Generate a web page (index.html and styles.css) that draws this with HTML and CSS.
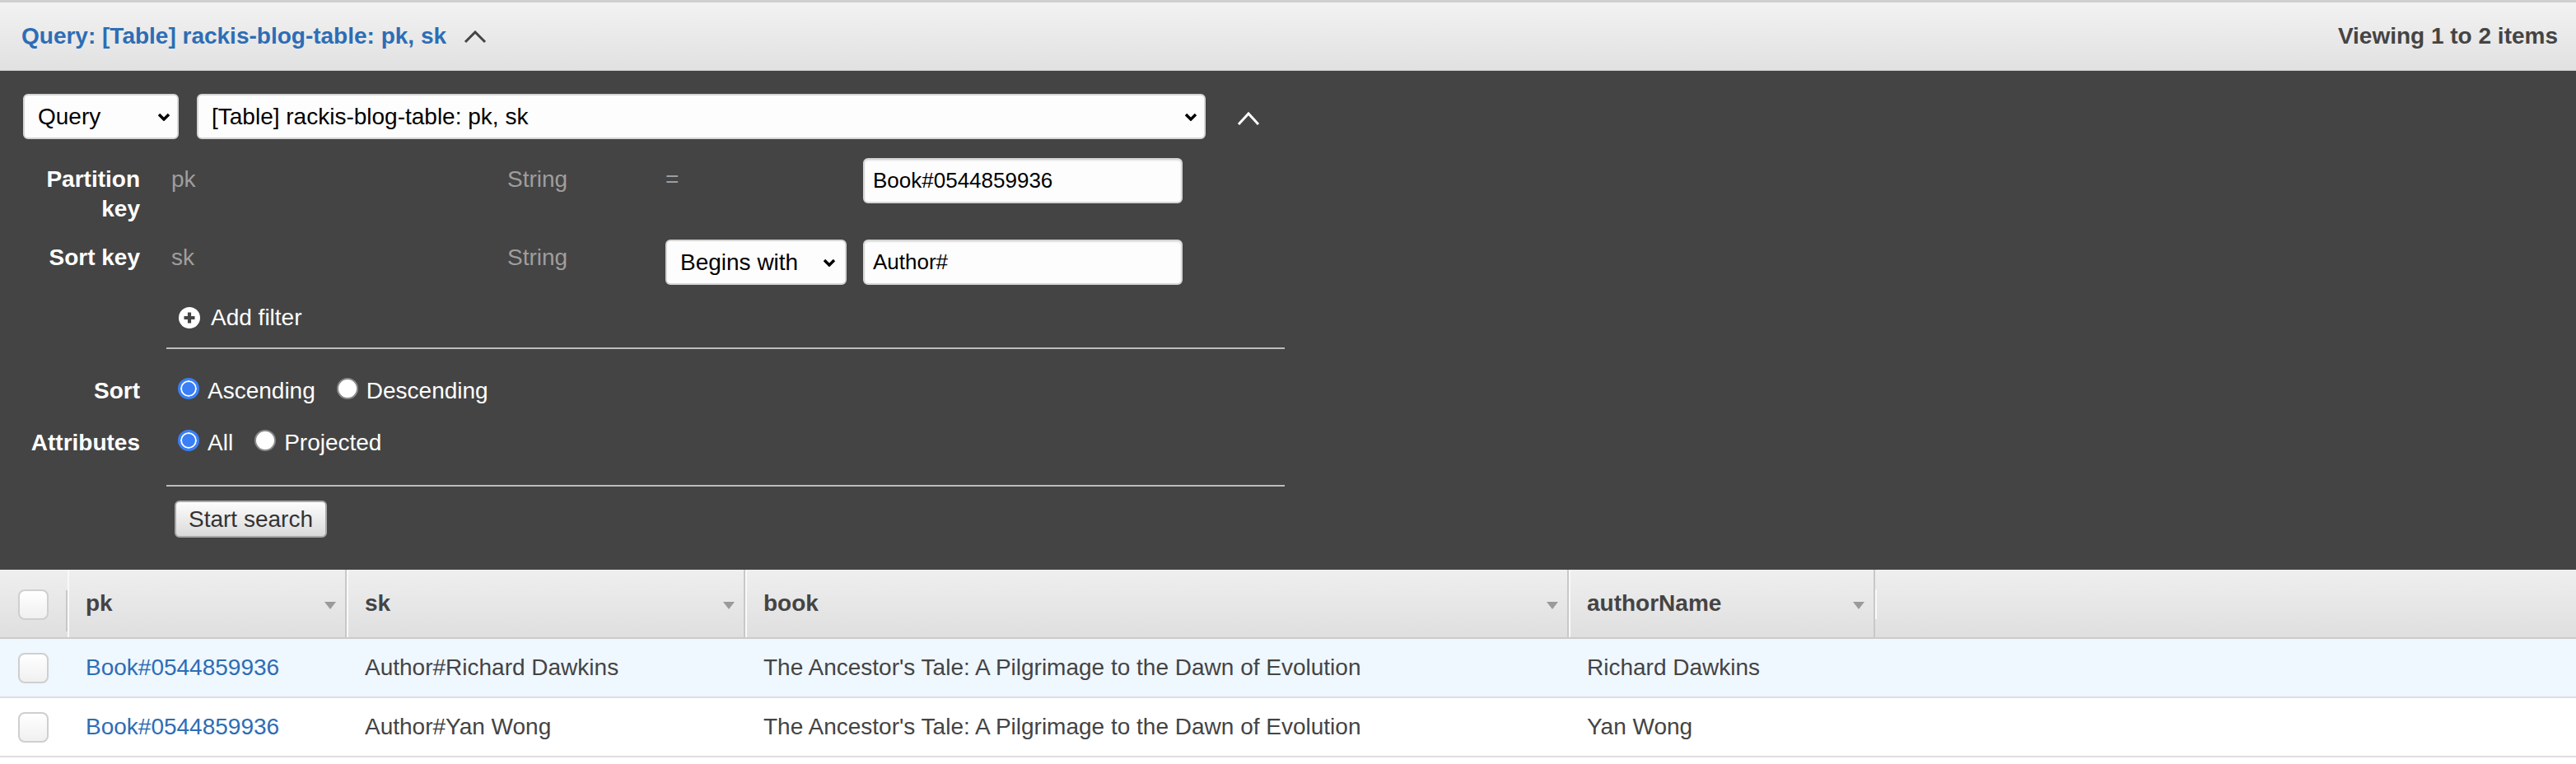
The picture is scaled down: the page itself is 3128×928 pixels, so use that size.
FILE: index.html
```html
<!DOCTYPE html>
<html>
<head>
<meta charset="utf-8">
<title>Query</title>
<link rel="stylesheet" href="styles.css">
</head>
<body>
<header class="qhead">
  <div class="qtitle">Query: [Table] rackis-blog-table: pk, sk</div>
  <svg class="chev-dark" viewBox="0 0 28 16"><polyline points="2,14 14,2 26,14" fill="none" stroke="#444" stroke-width="3"/></svg>
  <div class="viewing">Viewing 1 to 2 items</div>
</header>

<section class="panel">
  <div class="row-top">
    <div class="sel sel-mode"><span>Query</span><svg viewBox="0 0 16 10"><polyline points="2,2 8,8 14,2" fill="none" stroke="#000" stroke-width="3.4"/></svg></div>
    <div class="sel sel-table"><span>[Table] rackis-blog-table: pk, sk</span><svg viewBox="0 0 16 10"><polyline points="2,2 8,8 14,2" fill="none" stroke="#000" stroke-width="3.4"/></svg></div>
    <svg class="chev-light" viewBox="0 0 28 18"><polyline points="2,16 14,3 26,16" fill="none" stroke="#fff" stroke-width="3"/></svg>
  </div>

  <div class="frow frow-pk">
    <div class="flabel">Partition key</div>
    <div class="fcontent keyrow">
      <span class="kname">pk</span>
      <span class="ktype">String</span>
      <span class="kop">=</span>
      <div class="inp">Book#0544859936</div>
    </div>
  </div>

  <div class="frow frow-sk">
    <div class="flabel">Sort key</div>
    <div class="fcontent keyrow">
      <span class="kname">sk</span>
      <span class="ktype">String</span>
      <div class="sel sel-op"><span>Begins with</span><svg viewBox="0 0 16 10"><polyline points="2,2 8,8 14,2" fill="none" stroke="#000" stroke-width="3.4"/></svg></div>
      <div class="inp">Author#</div>
    </div>
  </div>

  <div class="frow frow-add">
    <div class="flabel flabel-flat"></div>
    <div class="fcontent addfilter">
      <svg class="plus" viewBox="0 0 26 26"><circle cx="13" cy="13" r="13" fill="#fff"/><path d="M13 6.5v13M6.5 13h13" stroke="#444" stroke-width="4.2"/></svg>
      <span>Add filter</span>
    </div>
  </div>

  <div class="divider divider-1"></div>

  <div class="frow frow-sort">
    <div class="flabel flabel-flat">Sort</div>
    <div class="fcontent radios">
      <label class="ropt"><span class="radio on"></span>Ascending</label>
      <label class="ropt"><span class="radio"></span>Descending</label>
    </div>
  </div>

  <div class="frow frow-attr">
    <div class="flabel flabel-flat">Attributes</div>
    <div class="fcontent radios">
      <label class="ropt"><span class="radio on"></span>All</label>
      <label class="ropt"><span class="radio"></span>Projected</label>
    </div>
  </div>

  <div class="divider divider-2"></div>

  <div class="btnrow">
    <button class="btn">Start search</button>
  </div>
</section>

<section class="grid">
  <div class="grid-head">
    <div class="c-check"><span class="cb"></span></div>
    <div class="c w-pk">pk<span class="sort"></span></div>
    <div class="c w-sk">sk<span class="sort"></span></div>
    <div class="c w-book">book<span class="sort"></span></div>
    <div class="c w-author">authorName<span class="sort"></span></div>
    <div class="c-fill"></div>
  </div>
  <div class="grid-row hl">
    <div class="c-check"><span class="cb"></span></div>
    <div class="c w-pk"><span class="link">Book#0544859936</span></div>
    <div class="c w-sk">Author#Richard Dawkins</div>
    <div class="c w-book">The Ancestor's Tale: A Pilgrimage to the Dawn of Evolution</div>
    <div class="c w-author">Richard Dawkins</div>
    <div class="c-fill"></div>
  </div>
  <div class="grid-row">
    <div class="c-check"><span class="cb"></span></div>
    <div class="c w-pk"><span class="link">Book#0544859936</span></div>
    <div class="c w-sk">Author#Yan Wong</div>
    <div class="c w-book">The Ancestor's Tale: A Pilgrimage to the Dawn of Evolution</div>
    <div class="c w-author">Yan Wong</div>
    <div class="c-fill"></div>
  </div>
</section>
</body>
</html>
```

FILE: styles.css
```css
* { box-sizing: border-box; }
html, body { margin: 0; padding: 0; background: #fff; }
body {
  font-family: "Liberation Sans", Arial, Helvetica, sans-serif;
  font-size: 28px;
  color: #444;
  width: 3128px;
}

/* top header */
.qhead {
  display: flex;
  align-items: center;
  height: 86px;
  padding: 0 22px 0 26px;
  border-top: 3px solid #cfcfcf;
  border-bottom: 1px solid #d2d2d2;
  background: linear-gradient(#f2f2f2, #e1e1e1);
}
.qtitle { font-weight: bold; color: #2d6db5; white-space: nowrap; }
.chev-dark { margin-left: 21px; width: 28px; height: 16px; margin-top: 2px; }
.viewing { margin-left: auto; font-weight: bold; color: #444; white-space: nowrap; }

/* query panel */
.panel {
  background: #444;
  padding: 28px 0 39px;
}
.row-top {
  display: flex;
  align-items: center;
  padding-left: 28px;
  gap: 22px;
}
.sel {
  display: flex;
  align-items: center;
  height: 55px;
  background: #fdfdfd;
  border: 2px solid #d6d6d6;
  border-radius: 6px;
  padding: 0 8px 0 16px;
  color: #000;
  font-size: 28px;
  white-space: nowrap;
}
.sel span { flex: 1; }
.sel svg { width: 16px; height: 10px; flex: none; }
.sel-mode { width: 189px; }
.sel-table { width: 1225px; }
.sel-op { width: 220px; padding-right: 11px; }
.chev-light { margin-left: 16px; width: 28px; height: 18px; margin-top: 4px; }

.frow { display: flex; align-items: flex-start; }
.flabel {
  width: 170px;
  padding-left: 28px;
  text-align: right;
  font-weight: bold;
  color: #fff;
  line-height: 36px;
  margin-top: 8px;
  flex: none;
}
.flabel-flat { margin-top: 0; }
.fcontent { margin-left: 34px; }

.frow-pk { margin-top: 23px; }
.frow-sk { margin-top: 19px; }
.frow-sk .flabel { margin-top: 4px; }

.keyrow {
  display: grid;
  grid-template-columns: 412px 192px 240px 388px;
  align-items: start;
  height: 55px;
}
.kname, .ktype, .kop {
  color: #9e9e9e;
  line-height: 36px;
  padding-top: 8px;
}
.kname { padding-left: 4px; }
.frow-sk .kname, .frow-sk .ktype { padding-top: 4px; }
.inp {
  height: 55px;
  border: 2px solid #d6d6d6;
  border-radius: 6px;
  background: #fdfdfd;
  padding: 0 10px;
  display: flex;
  align-items: center;
  font-size: 26px;
  color: #000;
  box-shadow: inset 0 1px 2px rgba(0, 0, 0, 0.12);
}

.frow-add { margin-top: 22px; }
.addfilter {
  display: flex;
  align-items: center;
  gap: 13px;
  padding-left: 13px;
  height: 36px;
  color: #fff;
}
.plus { width: 26px; height: 26px; flex: none; }

.divider {
  width: 1358px;
  height: 2px;
  background: #bdbdbd;
  margin-left: 202px;
}
.divider-1 { margin-top: 18px; }
.divider-2 { margin-top: 33px; }

.frow-sort { margin-top: 33px; }
.frow-attr { margin-top: 27px; }
.radios {
  display: flex;
  align-items: flex-start;
  padding-left: 12px;
  line-height: 36px;
  color: #fff;
}
.ropt { display: flex; align-items: flex-start; margin-right: 26px; }
.radio {
  width: 26px;
  height: 26px;
  border-radius: 50%;
  margin-top: 2px;
  margin-right: 10px;
  background: #fff;
  border: 2px solid #8a8a8a;
  flex: none;
}
.radio.on {
  border: 3px solid #3a7ff6;
  background: #3a7ff6;
  box-shadow: inset 0 0 0 2px #fff;
}

.btnrow { display: flex; margin-top: 17px; padding-left: 212px; }
.btn {
  height: 45px;
  padding: 0 15px;
  border: 2px solid #a9a9a9;
  border-radius: 6px;
  background: linear-gradient(#fdfdfd, #dadada);
  color: #333;
  font-family: "Liberation Sans", Arial, sans-serif;
  font-size: 28px;
  line-height: 41px;
}

/* results grid */
.grid-head {
  display: flex;
  height: 84px;
  border-bottom: 2px solid #cbcbcb;
  background: linear-gradient(#efefef, #dfdfdf);
}
.grid-row {
  display: flex;
  height: 72px;
  border-bottom: 2px solid #dedede;
  background: #fff;
}
.grid-row.hl { background: #eff7ff; }

.c-check {
  width: 82px;
  padding-left: 22px;
  display: flex;
  align-items: center;
  position: relative;
  flex: none;
}
.grid-head .c-check::after {
  content: "";
  position: absolute;
  right: 0;
  top: 25px;
  bottom: 7px;
  width: 2px;
  background: #c8c8c8;
}
.cb {
  width: 37px;
  height: 37px;
  border: 2px solid #cfcfcf;
  border-radius: 8px;
  background: linear-gradient(#fff, #f0f0f0);
}
.grid-head .cb { margin-top: 2px; }

.c {
  display: flex;
  align-items: center;
  padding-left: 20px;
  border-left: 2px solid transparent;
  border-right: 2px solid transparent;
  white-space: nowrap;
  flex: none;
  color: #444;
}
.grid-head .c {
  border-left-color: #f9f9f9;
  border-right-color: #c8c8c8;
  font-weight: bold;
}
.w-pk { width: 339px; }
.w-sk { width: 484px; }
.w-book { width: 1000px; }
.w-author { width: 372px; }
.c-fill { flex: 1; position: relative; }
.grid-head .c-fill::before {
  content: "";
  position: absolute;
  left: 0;
  top: 24px;
  bottom: 22px;
  width: 2px;
  background: #fafafa;
}

.sort {
  margin-left: auto;
  margin-right: 11px;
  margin-top: 4px;
  width: 0;
  height: 0;
  border-left: 7px solid transparent;
  border-right: 7px solid transparent;
  border-top: 9px solid #9a9a9a;
}
.link { color: #2d6db5; }
```
